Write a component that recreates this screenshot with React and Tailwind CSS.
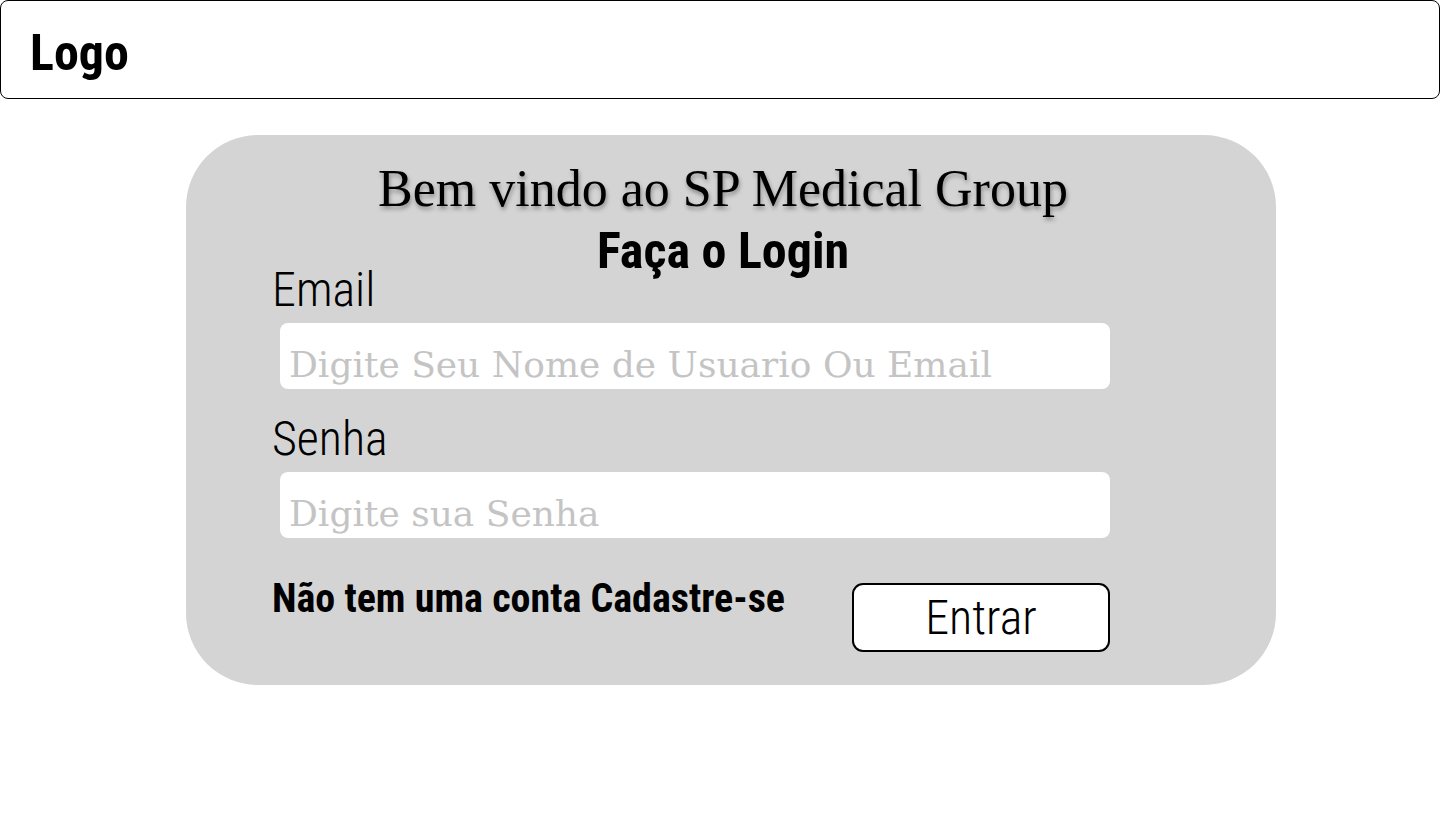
export default function App() {
  const cond = { fontFamily: "Roboto, 'Liberation Sans', sans-serif" };
  return (
    <div className="min-h-screen w-full bg-white" style={cond}>
      {/* header */}
      <header className="h-[99px] w-full rounded-lg border border-black flex items-start pt-[27px] pl-[29px]">
        <span className="text-[50px] font-bold [font-stretch:75%] leading-[50px] text-black">Logo</span>
      </header>

      {/* login card */}
      <main className="ml-[186px] mt-[36px] w-[1090px] h-[550px] rounded-[72px] bg-[#d4d4d4] pt-[24px] pl-[86px]">
        <h1 className="text-center pr-[102px] text-[52px] leading-[60px] text-black [text-shadow:1px_3px_4px_rgba(0,0,0,0.35)] font-['Liberation_Serif',serif]">
          Bem vindo ao SP Medical Group
        </h1>
        <h2 className="text-center pr-[102px] mt-[10px] text-[50px] font-bold [font-stretch:75%] leading-[44px] text-black">
          Faça o Login
        </h2>

        <label className="block text-[48px] font-light [font-stretch:75%] leading-[44px] mt-[-5px] text-black">Email</label>
        <div className="ml-[8px] mt-[11px] w-[830px] h-[66px] rounded-lg bg-white flex items-end pb-[6px] pl-[9px]">
          <span className="text-[36px] leading-[36px] text-[#c4c4c4] font-['DejaVu_Serif',serif]">
            Digite Seu Nome de Usuario Ou Email
          </span>
        </div>

        <label className="block text-[48px] font-light [font-stretch:75%] leading-[44px] mt-[28px] text-black">Senha</label>
        <div className="ml-[8px] mt-[11px] w-[830px] h-[66px] rounded-lg bg-white flex items-end pb-[6px] pl-[9px]">
          <span className="text-[36px] leading-[36px] text-[#c4c4c4] font-['DejaVu_Serif',serif]">Digite sua Senha</span>
        </div>

        <div className="mt-[45px] flex items-start w-[838px] justify-between">
          <span className="mt-[-4px] text-[40px] font-bold [font-stretch:75%] leading-[40px] text-black">
            Não tem uma conta Cadastre-se
          </span>
          <button className="w-[258px] h-[69px] rounded-[11px] border-2 border-black bg-white text-[48px] font-light [font-stretch:75%] leading-none text-black">
            Entrar
          </button>
        </div>
      </main>
    </div>
  );
}
